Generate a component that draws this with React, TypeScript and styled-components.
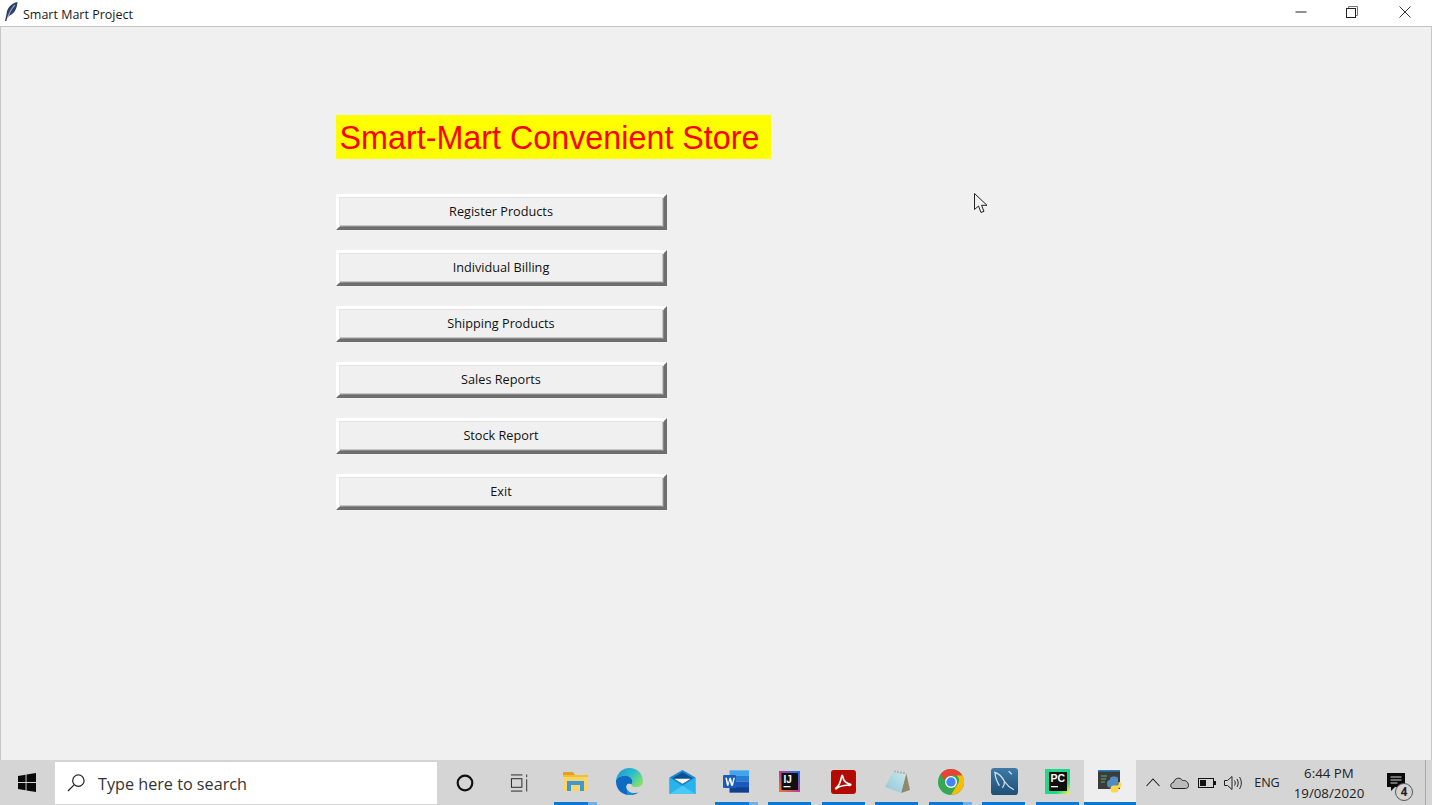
import React from "react";
import styled, { createGlobalStyle } from "styled-components";

const Global = createGlobalStyle`
  html, body { margin: 0; padding: 0; height: 100%; overflow: hidden; }
  #root { height: 100%; }
`;

const Screen = styled.div`
  position: relative;
  width: 1432px;
  height: 805px;
  display: flex;
  flex-direction: column;
  background: #f0f0f0;
  font-family: "Open Sans", "Noto Sans", sans-serif;
`;

const TitleBar = styled.header`
  flex: 0 0 26px;
  display: flex;
  align-items: center;
  padding-right: 21px;
  background: #fff;
  border-bottom: 1px solid #c4c4c4;
`;
const AppGlyph = styled.svg`
  width: 14px;
  height: 20px;
  margin-left: 4px;
  margin-top: -3px;
`;
const WindowTitle = styled.span`
  margin-left: 5px;
  padding-top: 2px;
  flex: 1;
  font-size: 12.5px;
  color: #1a1a1a;
`;
const WinButton = styled.div<{ $gap: number }>`
  width: 12px;
  height: 12px;
  margin-left: ${(p) => p.$gap}px;
  margin-top: -2px;
  display: flex;
`;

const Client = styled.main`
  flex: 1;
  display: flex;
  flex-direction: column;
  align-items: flex-start;
  padding: 88px 0 0 335px;
  border-left: 1px solid #c8c8c8;
  border-right: 1px solid #c8c8c8;
  box-sizing: border-box;
  background: #f0f0f0;
  gap: 20px;
`;
const Banner = styled.h1`
  width: 435px;
  height: 44px;
  box-sizing: border-box;
  margin: 0 0 15px;
  padding: 1px 0 0 3.5px;
  background: #ffff00;
  color: #ff0000;
  font: 400 32.3px/44px "Liberation Sans", Arial, sans-serif;
  white-space: nowrap;
`;
const TkButton = styled.button`
  width: 331px;
  height: 36px;
  box-sizing: border-box;
  padding: 0 1px 2px 0;
  background: #f0f0f0;
  border-style: solid;
  border-width: 3px;
  border-color: #ffffff #6e6e6e #6e6e6e #ffffff;
  box-shadow: inset 1px 1px 0 #e3e3e3, inset -1px -1px 0 #8a8a8a, inset -2px -2px 0 #c6c6c6;
  color: #111;
  font: 400 12.7px "Open Sans", "Noto Sans", sans-serif;
`;

const Taskbar = styled.footer`
  flex: 0 0 45px;
  display: flex;
  align-items: stretch;
  background: #d5d5d5;
`;
const StartSlot = styled.div`
  flex: 0 0 55px;
  box-sizing: border-box;
  padding-right: 1px;
  display: flex;
  align-items: center;
  justify-content: center;
`;
const SearchBox = styled.div`
  flex: 0 0 382px;
  margin: 2px 0 1px;
  display: flex;
  align-items: center;
  background: #fff;
  padding-left: 12px;
  box-sizing: border-box;
  gap: 13px;
  color: #333;
  font-size: 16.2px;
`;
const SearchLabel = styled.span`
  padding-top: 2px;
`;
const ToolSlot = styled.div<{ $w: number; $shift?: number }>`
  flex: 0 0 ${(p) => p.$w}px;
  box-sizing: border-box;
  padding-right: ${(p) => p.$shift ?? 0}px;
  display: flex;
  align-items: center;
  justify-content: center;
`;
const AppSlot = styled.div<{ $open?: boolean; $split?: boolean; $active?: boolean }>`
  position: relative;
  flex: 0 0 ${(p) => (p.$active ? 51.5 : 53.55)}px;
  display: flex;
  align-items: center;
  justify-content: center;
  padding-bottom: 2px;
  box-sizing: border-box;
  background: ${(p) => (p.$active ? "#eeeeee" : "transparent")};
  &::after {
    content: "";
    display: ${(p) => (p.$open ? "block" : "none")};
    position: absolute;
    bottom: 0;
    height: 3px;
    left: ${(p) => (p.$active ? 0 : 5)}px;
    right: ${(p) => (p.$active ? 0 : 5.55)}px;
    background: ${(p) =>
      p.$split
        ? "linear-gradient(90deg, #0a78d4 0 79%, #6fb0e6 79% 100%)"
        : "#0a78d4"};
  }
`;
const Tray = styled.div`
  flex: 1;
  display: flex;
  align-items: center;
  color: #222;
`;
const TrayIcon = styled.div<{ $w: number }>`
  flex: 0 0 ${(p) => p.$w}px;
  display: flex;
  align-items: center;
  justify-content: center;
`;
const Lang = styled.div`
  flex: 0 0 34px;
  margin-left: 8px;
  text-align: center;
  font-size: 12.6px;
`;
const Clock = styled.div`
  flex: 0 0 88px;
  margin-left: 1px;
  text-align: center;
  font-size: 13.3px;
  line-height: 20px;
`;
const Notice = styled.div`
  position: relative;
  flex: 0 0 46px;
  display: flex;
  align-items: center;
  justify-content: center;
  margin-top: -2px;
`;
const NoticeBadge = styled.span`
  position: absolute;
  left: 22px;
  top: 10px;
  width: 18px;
  height: 18px;
  box-sizing: border-box;
  border: 1px solid #555;
  border-radius: 50%;
  background: #d5d5d5;
  font-size: 11.5px;
  font-weight: 700;
  line-height: 16px;
  text-align: center;
`;
const ShowDesktop = styled.div`
  flex: 1;
  margin-left: 6px;
  align-self: stretch;
  border-left: 1px solid #a9a9a9;
`;
const Pointer = styled.svg`
  position: absolute;
  left: 974px;
  top: 193px;
  width: 15px;
  height: 21px;
`;

const Feather = () => (
  <AppGlyph viewBox="0 0 14 20">
    <path d="M13.500 0C7.500 1 3 6 2.500 12L1 19h1.300l1.700-5c5-1 9-6 9.500-14z" fill="#2c3f5e" />
    <path d="M11 3C8 6 5.500 10 4 15" stroke="#86a3c8" strokeWidth="1.200" fill="none" />
  </AppGlyph>
);

const Explorer = () => (
  <svg width="25" height="19" viewBox="0 0 25 19">
    <path d="M0 0h10l2 3H0z" fill="#e0a220" />
    <rect x="0" y="3" width="25" height="16" fill="#fbd565" />
    <rect x="0" y="3" width="25" height="2" fill="#f3bd34" />
    <path d="M4 9h17v10h-4v-6H8v6H4z" fill="#3f97d6" />
  </svg>
);
const Edge = () => (
  <svg width="27" height="27" viewBox="0 0 28 28">
    <defs>
      <linearGradient id="eg" x1="0" y1="0" x2="1" y2=".7">
        <stop offset="0" stopColor="#1a8fdc" />
        <stop offset=".55" stopColor="#2cc0c8" />
        <stop offset="1" stopColor="#86e069" />
      </linearGradient>
    </defs>
    <path d="M0 13C1 5 7 0 14 0c8 0 14 6 14 14 0 4-3 6-7 6-3 0-5-1-5-3 0-1 1-1 1-3 0-3-3-6-7-6-5 0-9 2-10 5z" fill="url(#eg)" />
    <path d="M0 13c1-3 5-5 10-5 4 0 7 3 7 6 0 2-1 2-1 3-3-2-6 0-5 4 1 3 5 5 9 5 2 0 4-1 5-2-3 3-7 4-11 4C6 28 0 22 0 14z" fill="#0b6cc2" />
    <path d="M11 21c-1-4 2-6 5-4 0 2 2 3 5 3 3 0 5-1 6-3-1 3-2 5-4 7-1 1-3 2-5 2-4 0-6-2-7-5z" fill="#d5d5d5" />
    <path d="M11 21c1 3 3 5 7 5 2 0 3-.5 5-2-3 3-7 4-9 4-2 0-3-1-3-7z" fill="#1493df" />
  </svg>
);
const Mail = () => (
  <svg width="27" height="24" viewBox="0 0 28 26">
    <path d="M0 8 14 0l14 8v18H0z" fill="#1a86d0" />
    <path d="M3 9 14 2.500 25 9 14 15z" fill="#0e4f96" />
    <path d="M5 9.500h18L14 15z" fill="#fff" />
    <path d="M0 8v18h28V8L14 17z" fill="#29b3ec" />
    <path d="M0 26 14 17l14 9z" fill="#4ac9f5" />
  </svg>
);
const Word = () => (
  <svg width="26" height="23" viewBox="0 0 28 24">
    <rect x="7" y="0" width="21" height="6" fill="#41a5ee" />
    <rect x="7" y="6" width="21" height="6" fill="#2b7cd3" />
    <rect x="7" y="12" width="21" height="6" fill="#185abd" />
    <rect x="7" y="18" width="21" height="6" fill="#103f91" />
    <rect x="0" y="5" width="14" height="14" rx="1" fill="#1a5cb8" />
    <path d="M2.500 8h1.700l1.300 6 1.500-6h1.500l1.400 6 1.300-6h1.600l-2.100 8.500H8.700L7.300 11l-1.500 5.500H4.300z" fill="#fff" />
  </svg>
);
const IntelliJ = () => (
  <svg width="21" height="21" viewBox="0 0 21 21">
    <defs>
      <linearGradient id="ij" x1="0" y1="1" x2="1" y2="0">
        <stop offset="0" stopColor="#f97a12" />
        <stop offset=".5" stopColor="#b83d93" />
        <stop offset="1" stopColor="#087cfa" />
      </linearGradient>
    </defs>
    <rect width="21" height="21" fill="url(#ij)" />
    <rect x="2.500" y="2" width="16.500" height="17" fill="#101010" />
    <text x="4.500" y="11.500" fontSize="10" fontWeight="700" fill="#fff" fontFamily="Liberation Sans">IJ</text>
    <rect x="4.500" y="15" width="7" height="1.300" fill="#fff" />
  </svg>
);
const Acrobat = () => (
  <svg width="25" height="24" viewBox="0 0 26 25">
    <rect width="26" height="25" rx="3" fill="#b30b00" />
    <path d="M5 19c3-2 5-7 6-12 .3-2 1-2 1.300 0 .5 4 3 7 8 8 1 .3 0 1-1 1-5-.5-9 0-14 3.500z" fill="none" stroke="#fff" strokeWidth="1.700" />
  </svg>
);
const Notepad = () => (
  <svg width="25" height="23" viewBox="0 0 25 23">
    <defs>
      <linearGradient id="np" x1="0" y1="1" x2="1" y2="0">
        <stop offset="0" stopColor="#8fc6d6" />
        <stop offset="1" stopColor="#c9e8ec" />
      </linearGradient>
    </defs>
    <path d="M21 2l4 18-9 3 5-19z" fill="#8f8a6c" />
    <path d="M8 2l13 2-5 19L0 17z" fill="url(#np)" />
    <path d="M8 0l14 2-1 2L8 2z" fill="#d8d8cc" />
    <path d="M10 .5v2M13 1v2M16 1.500v2M19 2v2" stroke="#77776a" strokeWidth=".7" />
  </svg>
);
const Chrome = () => (
  <svg width="26" height="26" viewBox="0 0 26 26">
    <circle cx="13" cy="13" r="13" fill="#34a853" />
    <path d="M13 0a13 13 0 0 1 11.300 6.500H13a6.500 6.500 0 0 0-6.200 4.500L2.400 5.400A13 13 0 0 1 13 0z" fill="#ea4335" />
    <path d="M24.300 6.500A13 13 0 0 1 13 26l5.700-9.500a6.500 6.500 0 0 0 0-10z" fill="#fbbc05" />
    <circle cx="13" cy="13" r="6" fill="#fff" />
    <circle cx="13" cy="13" r="4.700" fill="#4285f4" />
  </svg>
);
const MySql = () => (
  <svg width="27" height="27" viewBox="0 0 26 26">
    <defs>
      <linearGradient id="ms" x1="0" y1="0" x2="0" y2="1">
        <stop offset="0" stopColor="#3d7aa5" />
        <stop offset="1" stopColor="#1e4f78" />
      </linearGradient>
    </defs>
    <rect width="26" height="26" rx="3" fill="url(#ms)" />
    <path d="M3 4c4 1 8 5 10 9 2 3 5 6 9 8M4 5c0 5 2 8 4 12M13 13c0 3-1 5-2 6M17 3l3 3" stroke="#d5e3ed" strokeWidth="1.200" fill="none" />
  </svg>
);
const PyCharm = () => (
  <svg width="25" height="25" viewBox="0 0 25 25">
    <defs>
      <linearGradient id="pc" x1="0" y1="0" x2="1" y2="1">
        <stop offset="0" stopColor="#21d789" />
        <stop offset=".7" stopColor="#21d789" />
        <stop offset="1" stopColor="#fcf84a" />
      </linearGradient>
    </defs>
    <rect width="25" height="25" fill="url(#pc)" />
    <rect x="4" y="3" width="18" height="19" fill="#101010" />
    <text x="5.500" y="13" fontSize="10.500" fontWeight="700" fill="#fff" fontFamily="Liberation Sans">PC</text>
    <rect x="6" y="17" width="7" height="1.300" fill="#fff" />
  </svg>
);
const PythonApp = () => (
  <svg width="24" height="24" viewBox="0 0 24 24">
    <rect x="0" y="0" width="22" height="19" fill="#3c3c3c" />
    <rect x="0" y="0" width="22" height="1.500" fill="#2a7fc9" />
    <path d="M3 6h6M3 9h5M3 12h4" stroke="#54b86a" strokeWidth="1" />
    <path d="M9 14c0-3 1-4 3-4V9c0-1.500 1-2.500 3-2.500h2c2 0 3 1 3 2.500v5c0 1.500-1 2.500-3 2.500h-4c-1 0-1.500 .5-1.500 1.500-1-.5-2.500-1.500-2.500-4z" fill="#4f8cc4" />
    <path d="M23.500 14c0 3-1 4-3 4v1.500c0 1.500-1 3-3 3h-2c-2 0-3-1.500-3-3v-1.500c0-1.500 1-2.500 3-2.500h3c1.500 0 2-.5 2-2v-1.500c1.500.2 3 .5 3 2z" fill="#fdd74d" />
  </svg>
);

const apps = [
  { icon: <Explorer />, open: true, split: true },
  { icon: <Edge /> },
  { icon: <Mail /> },
  { icon: <Word />, open: true, split: true },
  { icon: <IntelliJ />, open: true },
  { icon: <Acrobat />, open: true },
  { icon: <Notepad />, open: true },
  { icon: <Chrome />, open: true, split: true },
  { icon: <MySql />, open: true },
  { icon: <PyCharm />, open: true },
];

const labels = [
  "Register Products",
  "Individual Billing",
  "Shipping Products",
  "Sales Reports",
  "Stock Report",
  "Exit",
];

export default function App() {
  return (
    <Screen>
      <Global />
      <TitleBar>
        <Feather />
        <WindowTitle>Smart Mart Project</WindowTitle>
        <WinButton $gap={0}>
          <svg width="12" height="12" viewBox="0 0 12 12">
            <path d="M.5 6h11" stroke="#222" strokeWidth="1" />
          </svg>
        </WinButton>
        <WinButton $gap={39}>
          <svg width="12" height="12" viewBox="0 0 12 12">
            <path d="M2.500 2.500V.5h9v9h-2" fill="none" stroke="#777" />
            <rect x=".5" y="2.500" width="9" height="9" fill="#fff" stroke="#222" />
          </svg>
        </WinButton>
        <WinButton $gap={41}>
          <svg width="12" height="12" viewBox="0 0 12 12">
            <path d="M.5.500l11 11M11.500.5l-11 11" stroke="#333" strokeWidth="1" />
          </svg>
        </WinButton>
      </TitleBar>

      <Client>
        <Banner>Smart-Mart Convenient Store</Banner>
        {labels.map((l) => (
          <TkButton key={l}>{l}</TkButton>
        ))}
      </Client>

      <Taskbar>
        <StartSlot>
          <svg width="18" height="19" viewBox="0 0 19 19" preserveAspectRatio="none">
            <path d="M0 3l8-1.200V9H0zM9 1.600 19 0v9H9zM0 10h8v7.300L0 16zM9 10h10v9L9 17.500z" fill="#0a0a0a" />
          </svg>
        </StartSlot>
        <SearchBox>
          <svg width="18" height="18" viewBox="0 0 19 19">
            <circle cx="12" cy="7" r="6" fill="none" stroke="#222" strokeWidth="1.300" />
            <path d="M7.500 11.500 1 18" stroke="#222" strokeWidth="1.300" />
          </svg>
          <SearchLabel>Type here to search</SearchLabel>
        </SearchBox>
        <ToolSlot $w={56}>
          <svg width="18" height="18" viewBox="0 0 18 18">
            <circle cx="9" cy="9" r="7.300" fill="none" stroke="#111" strokeWidth="2.200" />
          </svg>
        </ToolSlot>
        <ToolSlot $w={56} $shift={3}>
          <svg width="19" height="18" viewBox="0 0 20 18">
            <path d="M1 .5h12M1 17.500h12" stroke="#222" />
            <rect x="1.500" y="4.500" width="11" height="9" fill="none" stroke="#222" />
            <path d="M17.500 0v3M17.500 5v13" stroke="#555" strokeWidth="1.300" />
          </svg>
        </ToolSlot>
        {apps.map((a, i) => (
          <AppSlot key={i} $open={a.open} $split={a.split}>
            {a.icon}
          </AppSlot>
        ))}
        <AppSlot $open $active>
          <PythonApp />
        </AppSlot>
        <Tray>
          <TrayIcon $w={34}>
            <svg width="14" height="9" viewBox="0 0 14 9">
              <path d="M.5 8 7 1l6.500 7" fill="none" stroke="#222" strokeWidth="1.100" />
            </svg>
          </TrayIcon>
          <TrayIcon $w={20}>
            <svg width="19" height="13" viewBox="0 0 19 13">
              <path d="M4 12.500c-4 0-4.500-5.500-.5-6C4.500 2 10 .5 12.500 4.500c3-.5 6 1.500 6 5 0 2-1.500 3-3 3z" fill="#bbb" stroke="#222" />
            </svg>
          </TrayIcon>
          <TrayIcon $w={34}>
            <svg width="18" height="10" viewBox="0 0 18 10">
              <rect x=".5" y=".5" width="15" height="9" fill="none" stroke="#111" />
              <rect x="2" y="2" width="6" height="6" fill="#111" />
              <rect x="16" y="3" width="2" height="4" fill="#111" />
            </svg>
          </TrayIcon>
          <TrayIcon $w={18}>
            <svg width="18" height="14" viewBox="0 0 18 14">
              <path d="M.5 4.500h3L8 .5v13l-4.500-4h-3z" fill="none" stroke="#222" />
              <path d="M10.500 4.500c1 1.500 1 3.500 0 5M13 3c1.600 2.500 1.600 5.500 0 8M15.500 1c2.400 3.500 2.400 8.500 0 12" fill="none" stroke="#222" />
            </svg>
          </TrayIcon>
          <Lang>ENG</Lang>
          <Clock>
            6:44 PM
            <br />
            19/08/2020
          </Clock>
          <Notice>
            <svg width="18" height="18" viewBox="0 0 18 18">
              <path d="M0 0h18v14H8l-4 4v-4H0z" fill="#0a0a0a" />
              <path d="M3.500 4h11M3.500 7h11M3.500 10h7" stroke="#d5d5d5" />
            </svg>
            <NoticeBadge>4</NoticeBadge>
          </Notice>
          <ShowDesktop />
        </Tray>
      </Taskbar>

      <Pointer viewBox="0 0 15 21">
        <path d="M.5.500v16l4-3.500 2.500 6.500 3-1.200-2.500-6h5.500z" fill="#f0f0f0" stroke="#222" strokeWidth="1" />
      </Pointer>
    </Screen>
  );
}
